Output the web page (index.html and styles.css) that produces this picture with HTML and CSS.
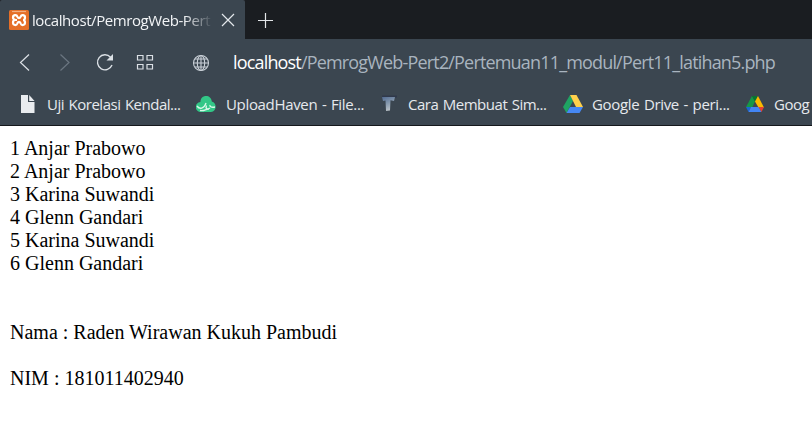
FILE: index.html
```html
<!DOCTYPE html>
<html lang="id">
<head>
<meta charset="utf-8">
<title>localhost/PemrogWeb-Pert2</title>
<link rel="stylesheet" href="styles.css">
</head>
<body>
<header class="tabs">
  <div class="tab">
    <svg class="xampp" width="20" height="20" viewBox="0 0 20 20"><rect width="20" height="20" rx="1.5" fill="#e56f28"/><path d="M3 1.5h14" stroke="#f3b083" stroke-width="1.2"/><path d="M8 10C4.500 10 4 8.900 4 7.400C4 5 7.500 4.200 8.300 6.600Q8.700 8.200 10 8.200T11.700 6.600C12.500 4.200 16 5 16 7.400C16 8.900 15.500 10 14 10C15.500 10 16 11.200 16 12.600C16 15.500 12.500 15.800 11.700 13.500Q11.300 11.800 10 11.800T8.300 13.500C7.500 15.800 4 15.500 4 12.600C4 11.200 4.500 10 6 10" fill="none" stroke="#fff" stroke-width="2.200"/></svg>
    <span class="tab-title">localhost/PemrogWeb-Pert</span>
    <svg class="close" width="14" height="14" viewBox="0 0 14 14"><path d="M1 1l12 12M13 1L1 13" stroke="#e3e7eb" stroke-width="1.200"/></svg>
  </div>
  <svg class="plus" width="16" height="16" viewBox="0 0 16 16"><path d="M8.500 1v15M1 8.500h15" stroke="#e3e6e9" stroke-width="1.200"/></svg>
</header>
<nav class="address">
  <svg class="tools" width="220" height="47" viewBox="0 0 220 47" fill="none" stroke="#dbe0e5" stroke-width="1.200">
    <path d="M29 15.500l-8.500 8L29 31.500"/>
    <path d="M60.500 15.500l8.500 8-8.500 8" stroke="#6b7681"/>
    <path d="M110.500 18.200A7.500 7.500 0 1 0 112 26" stroke-width="1.400"/><path d="M113 15v6.500h-6.500z" fill="#dbe0e5" stroke="none"/>
    <path d="M137.500 16.500h5.500v4.500h-5.500zM147 16.500h5.500v4.500h-5.500zM137.500 25.500h5.500v4.500h-5.500zM147 25.500h5.500v4.500h-5.500z"/>
    <g stroke="#c9d0d7" stroke-width="1.100"><circle cx="201" cy="24" r="7.500"/><ellipse cx="201" cy="24" rx="3.700" ry="7.500"/><path d="M193.500 24h15M201 16.500v15M194.700 20h12.600M194.700 28h12.600"/></g>
  </svg>
  <span class="url"><b>localhost</b>/PemrogWeb-Pert2/Pertemuan11_modul/Pert11_latihan5.php</span>
</nav>
<nav class="bookmarks">
  <a class="mark m1"><svg width="20" height="20" viewBox="0 0 20 20"><path d="M2 1h7v7h6.500v11H2z" fill="#e9ecef"/><path d="M10.200 1l5.300 6h-5.300z" fill="#e9ecef"/></svg><span>Uji Korelasi Kendal...</span></a>
  <a class="mark m2"><svg width="20" height="20" viewBox="0 0 20 20"><path d="M5 18a5 5 0 0 1-.6-10C4.500 4 7 2 10 2s5.500 2 5.800 5.500c5.500 1.500 5 10-.8 10.500z" fill="#32c787"/><path d="M1 12c2.500 3.500 7 3 9-3M10.500 11.500c-1.200 3 .5 4.500 3.500 2.500M14 11c-.5 2 1.500 2.500 5 2M4 16.500c5 .8 5-1.500 9-1.500" stroke="#d7f7e8" stroke-width="1.400" fill="none"/></svg><span>UploadHaven - File...</span></a>
  <a class="mark m3"><svg width="20" height="20" viewBox="0 0 20 20"><defs><linearGradient id="t" x2=".4" y2="1"><stop stop-color="#526b92"/><stop offset=".5" stop-color="#8296ac"/><stop offset="1" stop-color="#b8c0c6"/></linearGradient></defs><path d="M2 1.500h15v2H2z" fill="#30394b"/><path d="M2 3h13l-1 4-3.500-.7-.5 10.200-4 .5-.5-10.500L3 7z" fill="url(#t)"/></svg><span>Cara Membuat Sim...</span></a>
  <a class="mark m4"><svg width="20" height="20" viewBox="0 0 20 20"><path d="M7 1L0 13l3.500 6L10 7z" fill="#1fa463"/><path d="M7 1h6.500l6.500 12h-7z" fill="#ffd04b"/><path d="M7 13h13l-3.500 6h-13z" fill="#4688f4"/></svg><span>Google Drive - peri...</span></a>
  <a class="mark m5"><svg width="18" height="20" viewBox="0 0 18 20"><path d="M6 2L0 13l2.500 1H6l3-6.500z" fill="#159747"/><path d="M6 2h6L9 7.500z" fill="#08752e"/><path d="M12 2L9 7.500l3.500 6H18z" fill="#fbba00"/><path d="M0 13h5l-2.500 5z" fill="#1967d2"/><path d="M5 13h8l2.500 5h-13z" fill="#4285f4"/><path d="M12.500 13H18l-2.500 5z" fill="#e44234"/></svg><span>Goog</span></a>
</nav>
<main>
  1 Anjar Prabowo<br>2 Anjar Prabowo<br>3 Karina Suwandi<br>4 Glenn Gandari<br>5 Karina Suwandi<br>6 Glenn Gandari<br><br><br>Nama : Raden Wirawan Kukuh Pambudi<br><br>NIM : 181011402940
</main>
</body>
</html>
```
FILE: styles.css
```css
body { margin: 0; height: 445px; overflow: hidden; background: #fff; }
svg { display: block; flex: none; }
.tabs, .address, .bookmarks { font-family: "Open Sans", "Noto Sans", sans-serif; white-space: nowrap; display: flex; align-items: center; box-sizing: border-box; }
.tabs { height: 39px; background: #1a1d21; }
.tab { display: flex; align-items: center; width: 245px; height: 39px; background: #3b4650; box-sizing: border-box; padding-left: 9px; border-radius: 2px 2px 0 0; }
.tab-title { margin-left: 3px; width: 181px; overflow: hidden; font-size: 15px; letter-spacing: -.42px; color: #f2f4f6; -webkit-mask-image: linear-gradient(90deg, #000 84%, transparent); mask-image: linear-gradient(90deg, #000 84%, transparent); }
.close { margin-left: 8px; }
.plus { margin-left: 12px; }
.address { height: 47px; background: #3b4650; }
.url { margin-left: 13px; margin-top: -1px; font-size: 18px; letter-spacing: -.83px; color: #a9b4bf; }
.url b { font-weight: 400; color: #fff; }
.bookmarks { height: 40px; padding-bottom: 4px; background: #3b4650; border-bottom: 1px solid #15181c; overflow: hidden; }
.mark { display: flex; align-items: center; flex: none; font-size: 15px; letter-spacing: -.48px; word-spacing: 1px; color: #e6e9ed; }
.m1 { width: 177px; margin-left: 19px; }
.m2 { width: 184px; letter-spacing: -.33px; }
.m3 { width: 183px; }
.m4 { width: 183px; letter-spacing: -.33px; }
.m1 span { margin-left: 8px; }
.m2 span { margin-left: 10px; }
.m3 span { margin-left: 8px; }
.m4 span { margin-left: 9px; }
.m5 span { margin-left: 10px; }
main { padding: 11px 10px; font: 20px/23px "Liberation Serif", serif; color: #000; }
```
